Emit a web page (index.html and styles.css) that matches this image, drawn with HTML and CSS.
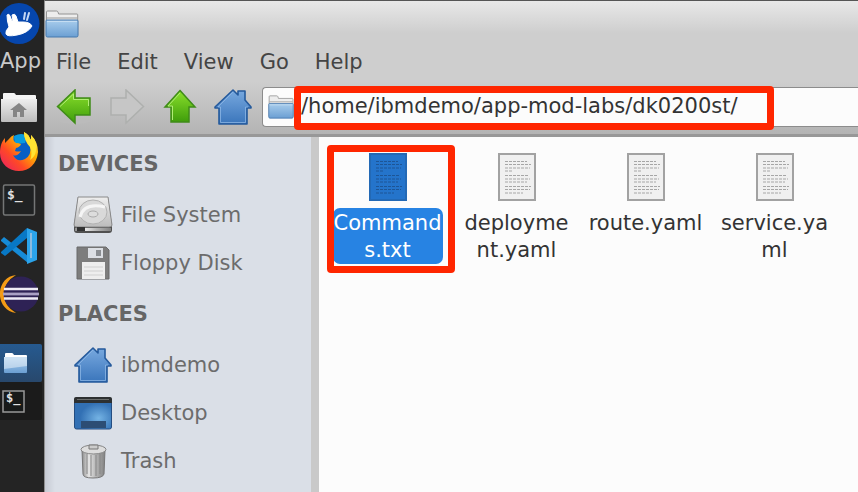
FILE: index.html
```html
<!DOCTYPE html>
<html lang="en">
<head>
<meta charset="utf-8">
<title>dk0200st - File Manager</title>
<link rel="stylesheet" href="styles.css">
</head>
<body>
<svg class="defs" aria-hidden="true">
  <defs>
    <linearGradient id="blue" x2="0" y2="1"><stop offset="0" stop-color="#78a9df"/><stop offset="1" stop-color="#3a75bb"/></linearGradient>
    <linearGradient id="folder" x2="0" y2="1"><stop offset="0" stop-color="#a9cdec"/><stop offset="1" stop-color="#6b9fd3"/></linearGradient>
    <linearGradient id="green" x2="0" y2="1"><stop offset="0" stop-color="#8be02c"/><stop offset="1" stop-color="#3f9d0b"/></linearGradient>
    <linearGradient id="pale" x2="0" y2="1"><stop offset="0" stop-color="#eeeeee"/><stop offset="1" stop-color="#bcbcbc"/></linearGradient>
    <linearGradient id="metal"><stop offset="0" stop-color="#8c8c8c"/><stop offset=".3" stop-color="#e6e6e6"/><stop offset=".6" stop-color="#b5b5b5"/><stop offset="1" stop-color="#828282"/></linearGradient>
    <linearGradient id="fire" x1="1" y1="0" x2="0" y2="1"><stop offset="0" stop-color="#fff36a"/><stop offset=".35" stop-color="#ffb400"/><stop offset=".65" stop-color="#ff4a25"/><stop offset="1" stop-color="#e81a6c"/></linearGradient>
    <radialGradient id="screen" cx=".65" cy=".65"><stop offset="0" stop-color="#74b3e4"/><stop offset="1" stop-color="#3270b4"/></radialGradient>
    <symbol id="house" viewBox="0 0 38 36">
      <path d="M19 1 24 6V2h7v9l6 7v1h-4v16H5V19H1v-1Z" fill="url(#blue)" stroke="#255a9c" stroke-width="1.600" stroke-linejoin="round"/>
      <path d="M19 3 4 18h2.500V33.500h25V18H34" fill="none" stroke="#94bce8" stroke-width="1" opacity=".7"/>
    </symbol>
    <symbol id="dir" viewBox="0 0 34 28">
      <path d="M1.500 25V2q0-1 1-1h9q1 0 1.500 1l.6 2H32q.7 0 .7.800V25Z" fill="#ededed" stroke="#949494"/>
      <path d="M2 8h30" stroke="#999"/>
      <path d="M1 11q0-1 1-1h30q1 0 1 1v14.500q0 1.500-1.500 1.500h-29Q1 27 1 25.500Z" fill="url(#folder)" stroke="#4678ad"/>
      <path d="M2 11.500h30" stroke="#c5ddf2"/>
    </symbol>
    <symbol id="page" viewBox="0 0 38 48">
      <rect class="sheet" x="1" y="1" width="36" height="46"/>
      <path class="print" d="M7 8.500h22M7 11.500h26M7 15h25M7 18h8M7 22.500h23M7 26h25M7 29h22M7 33.500h26M7 36.500h25M7 40h18"/>
    </symbol>
  </defs>
</svg>

<div class="desktop">
  <nav class="dock" aria-label="Panel">
    <button class="whisker" aria-label="Applications menu">
      <svg width="40" height="46" viewBox="0 0 40 46"><circle cx="19" cy="23.500" r="20.500" fill="#0646ad"/><path d="M7 15q2-2 3 1l2 5 1 0-1-6q3-2 4 1l2 6 5 0q7 0 9 4-4 7-15 9-10 2-11-1-1-3 3-7-2-6-2-12Z" fill="#fff" stroke="#fff" stroke-linejoin="round"/><path d="m24 19 1-6m2 7 2-7" stroke="#c5d8f5" stroke-width="2" stroke-linecap="round"/></svg>
    </button>
    <span class="dock-label">App</span>
    <button class="launcher" aria-label="Home folder">
      <svg width="40" height="46" viewBox="0 85 40 46"><path d="M3 100v-6q0-1 1-1h10q1 0 2 2h19q1 0 1 1v5" fill="#f5f5f5"/><path d="M1 99h36v22q0 1-1 1H2q-1 0-1-1Z" fill="url(#pale)"/><path d="m19 103 8 7h-3v7h-4v-5h-3v5h-4v-7h-3Z" fill="#858585"/></svg>
    </button>
    <button class="launcher" aria-label="Firefox">
      <svg width="40" height="46" viewBox="0 131 40 46"><circle cx="20" cy="150" r="15" fill="#075fc6"/><path d="M14 136q8-4 13 0l-2 7-10 1Z" fill="#079bdf"/><path d="M24 132q6 3 6 8 2-2 1-5 7 7 7 17c-1 12-9 19-19 19S0 164 0 153c0-7 2-12 5-15v5l4-4q2-3 5-4-2 5 2 8 3 0 5 1-1 3-5 4l-1 3q3 1 6 0-4 6-8 4 4 8 12 4 7-4 5-13-1-4-4-6-2-3-2-8Z" fill="url(#fire)"/><path d="M24 132q6 3 6 8 2-2 1-5 7 7 5 16-1 6-6 9 3-7 0-13-6-6-6-15Z" fill="#ffe333"/></svg>
    </button>
    <button class="launcher" aria-label="Terminal">
      <svg width="40" height="46" viewBox="0 177 40 46"><rect x="3.500" y="185" width="31" height="30" rx="1.500" fill="#202223" stroke="#747676" stroke-width="1.500"/><text class="prompt" x="7" y="199">$_</text></svg>
    </button>
    <button class="launcher" aria-label="Visual Studio Code">
      <svg width="40" height="46" viewBox="0 223 40 46"><path d="m1 240 3-3 24 19v7L1 241Z" fill="#168bd7"/><path d="m1 252 26-24v10L5 256l-4-3Z" fill="#0878c5"/><path d="m27 228 10 4v28l-10 4Z" fill="#2ba3ea"/><path d="M31 233v25" stroke="#8bbbe0" stroke-width="2"/></svg>
    </button>
    <button class="launcher" aria-label="Eclipse">
      <svg width="40" height="46" viewBox="0 269 40 46"><path d="M16 275C-5 277-6 310 16 313q-12-7-12-19t12-19" fill="#f49b16"/><circle cx="21" cy="294" r="17.500" fill="#2e2255"/><path d="M4 289h34M3 294h36M4 298.500h34" stroke="#eeebf5" stroke-width="2.500"/><path d="M3 294h36" stroke="#aaa1c4" stroke-width="2"/></svg>
    </button>
    <div class="tasks">
      <button class="task task-active" aria-label="dk0200st - File Manager">
        <svg width="40" height="38" viewBox="0 344 40 38"><path d="M5 360v-6q0-1 1-1h6q1 0 2 2h12q1 0 1 1v4" fill="#fff"/><path d="M4 357h23v15q0 1-1 1H5q-1 0-1-1Z" fill="url(#folder)"/><path d="M4 357h23v9L4 369Z" fill="#fff" opacity=".45"/></svg>
      </button>
      <button class="task" aria-label="Terminal window">
        <svg width="40" height="38" viewBox="0 382 40 38"><rect x="3" y="391" width="21" height="21" fill="#171919" stroke="#999" stroke-width="1.500"/><text class="prompt prompt-small" x="6" y="402">$_</text></svg>
      </button>
    </div>
  </nav>

  <main class="window">
    <header class="chrome">
      <div class="titlebar"><svg width="34" height="28"><use href="#dir"/></svg></div>
      <div class="menubar" role="menubar">
        <button role="menuitem">File</button><button role="menuitem">Edit</button><button role="menuitem">View</button><button role="menuitem">Go</button><button role="menuitem">Help</button>
      </div>
      <div class="toolbar">
        <button class="tool" aria-label="Back"><svg width="36" height="36" viewBox="0 0 36 36"><ellipse cx="19" cy="32" rx="15" ry="3" fill="#bbb"/><path d="M1.500 17.500 19 1v8h15v17H19v8Z" fill="url(#green)" stroke="#3f8c18" stroke-width="1.500"/><path d="M4 17.500 17.500 5v5.500h15V17" fill="none" stroke="#b1ed77"/></svg></button>
        <button class="tool" aria-label="Forward" disabled><svg width="36" height="36" viewBox="0 0 36 36"><path d="M34.500 17.500 17 1v8H2v17h15v8Z" fill="#c6c6c6" stroke="#aeb0ae" stroke-width="1.500"/></svg></button>
        <button class="tool" aria-label="Open parent"><svg width="34" height="36" viewBox="0 0 34 36"><path d="M17 1.500 32 18h-6v15H8V18H2Z" fill="url(#green)" stroke="#3f8c18" stroke-width="1.500"/><path d="M17 4 5 17h4.500v14" fill="none" stroke="#b1ed77"/></svg></button>
        <button class="tool" aria-label="Home"><svg width="38" height="36"><use href="#house"/></svg></button>
        <div class="location">
          <svg width="26" height="24" viewBox="0 0 34 28" preserveAspectRatio="none"><use href="#dir"/></svg>
          <input type="text" aria-label="Location" value="/home/ibmdemo/app-mod-labs/dk0200st/" spellcheck="false">
          <span class="mark mark-path"></span>
        </div>
      </div>
    </header>

    <div class="body">
      <aside class="places">
        <h2>DEVICES</h2>
        <a href="#fs"><svg width="40" height="38" viewBox="0 0 40 38"><path d="M5 1h30l4 28v5q0 3-3 3H4q-3 0-3-3v-5Z" fill="#505050"/><path d="M5 1h30l4 28q0 2-3 2H4q-3 0-3-2Z" fill="url(#pale)" stroke="#8a8a8a"/><ellipse cx="20" cy="16" rx="14" ry="12" fill="#d9d9d9" stroke="#b2b2b2"/><path d="M7 21q4-15 25-10" fill="none" stroke="#f5f5f5" stroke-width="3"/><ellipse cx="20" cy="18" rx="5" ry="3" fill="#ddd" stroke="#aaa"/><path d="M2 32h36v3H2Z" fill="url(#metal)"/><path d="M4 31h8v4H4Z" fill="#333"/></svg>File System</a>
        <a href="#floppy"><svg width="40" height="34" viewBox="0 0 40 34"><path d="M4 1h29l3 3v29H4Z" fill="#7d7d7d" stroke="#6b6b6b"/><path d="M15 2h15v10H15Z" fill="#dcdfe4"/><path d="M23 4h5v6h-5Z" fill="#8a8d91"/><path d="M9 16h23v17H9Z" fill="#eee"/><path d="M11 21h19m-19 4h19m-19 4h19" stroke="#d0d0d0"/></svg>Floppy Disk</a>
        <h2>PLACES</h2>
        <a href="#home"><svg width="40" height="36" viewBox="0 0 40 36"><use href="#house" x="1" width="38" height="36"/></svg>ibmdemo</a>
        <a href="#desktop"><svg width="40" height="34" viewBox="0 0 40 34"><rect x="1.500" y="2" width="37" height="31" rx="2" fill="url(#screen)" stroke="#244d81"/><path d="M1 7V3q0-2 2-2h34q2 0 2 2v4Z" fill="#2d3031"/><path d="M4 3.500h32" stroke="#6b6e6c"/><path d="M8 25h25v7H8Z" fill="#2c4d74"/></svg>Desktop</a>
        <a href="#trash"><svg width="40" height="36" viewBox="0 0 40 36"><path d="M9 7h23l-1 24q-1 4-11 4T10 31Z" fill="url(#metal)" stroke="#777"/><path d="M14 11v20m4-19v21m5-21v21m4-22v20" stroke="#858585"/><ellipse cx="20.500" cy="6.500" rx="12.500" ry="4.500" fill="#ddd" stroke="#858585"/><path d="M16 6V2h9v4Z" fill="#ccc" stroke="#777"/></svg>Trash</a>
        <a href="#network" aria-label="Browse Network"><svg width="40" height="36" viewBox="0 0 40 36"><rect x="6" y="5" width="19" height="22" fill="#a7a9ad"/></svg></a>
      </aside>
      <section class="files" aria-label="Files">
        <button class="file file-selected"><svg width="38" height="48"><use href="#page"/></svg><span class="name">Commands.txt</span><span class="mark mark-file"></span></button>
        <button class="file"><svg width="38" height="48"><use href="#page"/></svg><span class="name">deployment.yaml</span></button>
        <button class="file"><svg width="38" height="48"><use href="#page"/></svg><span class="name">route.yaml</span></button>
        <button class="file"><svg width="38" height="48"><use href="#page"/></svg><span class="name">service.yaml</span></button>
      </section>
    </div>
  </main>
</div>
</body>
</html>
```
FILE: styles.css
```css
* { box-sizing: border-box; }
body {
  margin: 0;
  overflow: hidden;
  font: 21px/27px "DejaVu Sans", sans-serif;
  color: #333;
}
button, input {
  font: inherit;
  color: inherit;
  padding: 0;
  border: 0;
  background: none;
}
svg { display: block; flex: none; }
.defs { position: absolute; width: 0; height: 0; }
.desktop { display: flex; height: 100vh; background: #242424; }

.dock { flex: none; width: 44px; overflow: hidden; }
.dock button { display: block; width: 42px; }
.dock-label { display: block; height: 39px; padding-top: 2px; color: #c9c9c9; }
.prompt { font: bold 13px "DejaVu Sans Mono", monospace; fill: #e2e2e2; }
.prompt-small { font-size: 12px; }
.tasks { margin-top: 29px; }
.task { background: #1b1b1b; border-radius: 0 2px 2px 0; }
.task-active { background: linear-gradient(#265a90, #28486c); }

.window {
  flex: 1;
  min-width: 0;
  display: flex;
  flex-direction: column;
  border-top: 1px solid #555;
  border-left: 1px solid #8f8f8f;
}
.chrome {
  flex: none;
  background: linear-gradient(#e8e8e8, #cecece 32px, #cecece 80px, #b4b4b4);
  border-bottom: 3px solid #989898;
}
.titlebar { height: 46px; padding-top: 9px; }
.menubar { display: flex; gap: 26px; height: 30px; padding-left: 11px; align-items: center; color: #444; }
.toolbar { display: flex; align-items: center; height: 57px; padding: 2px 0 0 2px; }
.tool { flex: none; display: flex; justify-content: center; width: 53px; }
.location {
  position: relative;
  flex: 1;
  min-width: 0;
  display: flex;
  align-items: center;
  gap: 7px;
  height: 40px;
  margin-left: 3px;
  padding-left: 5px;
  background: #fcfcfc;
  border: 1px solid #8c8c8c;
  border-right: 0;
  border-radius: 4px 0 0 4px;
}
.location input { flex: 1; min-width: 0; outline: 0; }

.body { flex: 1; min-height: 0; display: flex; }
.places {
  flex: none;
  width: 274px;
  overflow: hidden;
  color: #6c6c6c;
  background: linear-gradient(90deg, #c6cad3, #dadfe7 10px);
  border-right: 8px solid #c9c9c9;
}
.places h2 {
  margin: 0;
  padding-left: 13px;
  font-size: 21px;
  line-height: 54px;
  color: #666;
}
.places a {
  display: flex;
  align-items: center;
  gap: 8px;
  height: 48px;
  padding-left: 28px;
  color: inherit;
  text-decoration: none;
}

.files {
  flex: 1;
  min-width: 0;
  display: grid;
  grid-template-columns: repeat(auto-fill, 129px);
  align-content: start;
  padding: 8px 0 0 4px;
  background: #fcfcfc;
}
.file {
  --sheet: #f0f0f0;
  --edge: #a2a2a2;
  --print: #a6a6a6;
  position: relative;
  display: flex;
  flex-direction: column;
  align-items: center;
  justify-content: flex-start;
  gap: 7px;
  padding-top: 8px;
}
.name {
  max-width: 116px;
  padding-top: 2px;
  overflow-wrap: anywhere;
  text-align: center;
}
.sheet { fill: var(--sheet); stroke: var(--edge); stroke-width: 2px; }
.print { stroke: var(--print); stroke-dasharray: 3px 1px; }
.file-selected { --sheet: #2474cb; --edge: #2369b5; --print: #1d5596; }
.file-selected .name { width: 110px; color: #fff; background: #2783e3; border-radius: 7px; }

.mark {
  position: absolute;
  border: 7px solid #ff2600;
  border-radius: 4px;
  pointer-events: none;
}
.mark-path { left: 31px; top: -2px; width: 480px; height: 44px; }
.mark-file { left: 4px; top: 0; width: 128px; height: 128px; }
```
